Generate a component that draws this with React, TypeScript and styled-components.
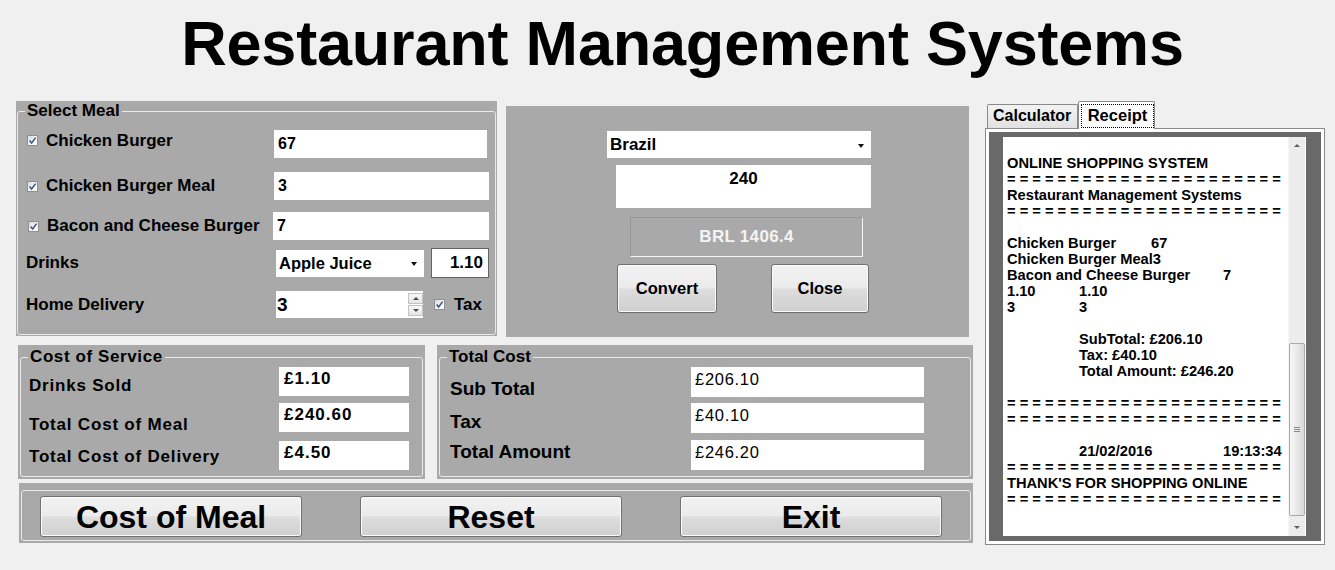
import React from "react";
import styled, { createGlobalStyle } from "styled-components";

const FONT = `"Liberation Sans", Arial, sans-serif`;

const GlobalStyle = createGlobalStyle`
  *, *::before, *::after { box-sizing: border-box; }
  html, body { margin: 0; padding: 0; background: #f0f0f0; }
  body { font-family: ${FONT}; color: #000; }
`;

const Window = styled.div`
  width: 1335px;
  height: 570px;
  overflow: hidden;
  background: #f0f0f0;
`;

const Title = styled.h1`
  margin: 0;
  height: 101px;
  padding: 7px 0 0 30px;
  text-align: center;
  font: bold 63px/72px ${FONT};
  letter-spacing: -0.2px;
  color: #000;
`;

const Main = styled.div`
  display: flex;
  align-items: flex-start;
  gap: 12px;
  padding-left: 16px;
`;

const LeftColumn = styled.div`
  width: 957px;
  display: flex;
  flex-direction: column;
`;

const Row = styled.div<{ $mt?: number; $ml?: number; $gap: number }>`
  display: flex;
  align-items: flex-start;
  gap: ${(p) => p.$gap}px;
  margin-top: ${(p) => p.$mt ?? 0}px;
  margin-left: ${(p) => p.$ml ?? 0}px;
`;

const Panel = styled.div<{ $w: number; $h: number; $pad: string; $mt?: number }>`
  flex: none;
  width: ${(p) => p.$w}px;
  height: ${(p) => p.$h}px;
  padding: ${(p) => p.$pad};
  margin-top: ${(p) => p.$mt ?? 0}px;
  background: #a9a9a9;
`;

const Group = styled.fieldset`
  margin: 0;
  padding: 0;
  min-width: 0;
  height: 100%;
  border: 1px solid #e9e9e9;
  border-radius: 3px;
`;

const Legend = styled.legend<{ $spacing?: number }>`
  margin-left: 7px;
  padding: 0 2px;
  font: bold 17px/18px ${FONT};
  letter-spacing: ${(p) => p.$spacing ?? 0}px;
`;

/* ---------- Select Meal ---------- */

const MealRows = styled.div`
  display: flex;
  flex-direction: column;
  padding-top: 10px;
`;

const MealRow = styled.div<{ $mt: number }>`
  display: flex;
  align-items: center;
  margin-top: ${(p) => p.$mt}px;
`;

const MealLabel = styled.div<{ $lift?: number; $indent: number }>`
  flex: none;
  width: 256px;
  display: flex;
  align-items: center;
  gap: 8px;
  padding-left: ${(p) => p.$indent}px;
  margin-bottom: ${(p) => p.$lift ?? 0}px;
  font: bold 17px/20px ${FONT};
  white-space: nowrap;
`;

const MealInput = styled.div<{ $w: number; $ml?: number }>`
  flex: none;
  width: ${(p) => p.$w}px;
  height: 28px;
  margin-left: ${(p) => p.$ml ?? 0}px;
  padding: 5px 0 0 4px;
  background: #fff;
  font: bold 16px/18px ${FONT};
`;

const Combo = styled.div<{ $w: number; $h: number; $ml?: number; $size: number }>`
  flex: none;
  width: ${(p) => p.$w}px;
  height: ${(p) => p.$h}px;
  margin-left: ${(p) => p.$ml ?? 0}px;
  display: flex;
  align-items: center;
  justify-content: space-between;
  padding: 0 7px 0 3px;
  background: #fff;
  font: bold ${(p) => p.$size}px/20px ${FONT};
`;

const ComboArrow = styled.span`
  width: 0;
  height: 0;
  border-left: 3.5px solid transparent;
  border-right: 3.5px solid transparent;
  border-top: 4px solid #111;
  margin-top: 2px;
`;

const PriceBox = styled.div`
  flex: none;
  width: 58px;
  height: 30px;
  margin-left: 7px;
  border: 1px solid #646464;
  background: #fff;
  padding-right: 5px;
  text-align: right;
  font: bold 17px/28px ${FONT};
`;

const Spinner = styled.div`
  flex: none;
  width: 147px;
  height: 27px;
  margin-left: 2px;
  display: flex;
  justify-content: space-between;
  background: #fff;
  padding: 3px 0 0 1px;
  font: bold 19px/22px ${FONT};
`;

const SpinButtons = styled.div`
  display: flex;
  flex-direction: column;
  gap: 1px;
  margin-top: -1px;
`;

const SpinButton = styled.div`
  width: 15px;
  height: 11px;
  border: 1px solid #c3c3c3;
  background: linear-gradient(#f8f8f8, #e6e6e6);
  display: flex;
  align-items: center;
  justify-content: center;
`;

const Tri = styled.span<{ $up?: boolean; $color?: string }>`
  width: 0;
  height: 0;
  border-left: 3px solid transparent;
  border-right: 3px solid transparent;
  ${(p) =>
    p.$up
      ? `border-bottom: 3px solid ${p.$color ?? "#4d4d4d"};`
      : `border-top: 3px solid ${p.$color ?? "#4d4d4d"};`}
`;

const TaxOption = styled.div`
  display: flex;
  align-items: center;
  gap: 9px;
  margin-left: 11px;
  font: bold 17px/20px ${FONT};
`;

const CheckBoxBox = styled.span`
  flex: none;
  width: 11px;
  height: 11px;
  border: 1px solid #8f8f8f;
  background: linear-gradient(135deg, #d6dbe2 0%, #f4f4f4 55%, #ffffff 100%);
  display: inline-flex;
  align-items: center;
  justify-content: center;
`;

function Check() {
  return (
    <CheckBoxBox>
      <svg width="9" height="9" viewBox="0 0 9 9">
        <path d="M1.6 4.6 L3.6 7 L7.6 1.6" fill="none" stroke="#3d5283" strokeWidth="1.5" />
      </svg>
    </CheckBoxBox>
  );
}

/* ---------- Currency ---------- */

const CurrencyBody = styled.div`
  display: flex;
  flex-direction: column;
  align-items: flex-start;
`;

const AmountBox = styled.div`
  width: 255px;
  height: 43px;
  margin: 7px 0 0 9px;
  padding-top: 4px;
  background: #fff;
  text-align: center;
  font: bold 17px/20px ${FONT};
`;

const ResultLabel = styled.div`
  width: 233px;
  height: 40px;
  margin: 9px 0 0 23px;
  border-style: solid;
  border-width: 1px;
  border-color: #979797 #f4f4f4 #f4f4f4 #979797;
  display: flex;
  align-items: center;
  justify-content: center;
  color: #f4f4f4;
  font: bold 17px/20px ${FONT};
  letter-spacing: 0.3px;
`;

const ButtonRow = styled.div`
  display: flex;
  gap: 54px;
  margin: 7px 0 0 10px;
`;

const WinButton = styled.button<{ $w: number; $h: number; $size: number }>`
  flex: none;
  width: ${(p) => p.$w}px;
  height: ${(p) => p.$h}px;
  padding: 0;
  border: 1px solid #707070;
  border-radius: 3px;
  box-shadow: inset 0 0 0 1px #fbfbfb;
  background: linear-gradient(#f2f2f2 0%, #ebebeb 48%, #dddddd 52%, #cfcfcf 100%);
  color: #000;
  font: bold ${(p) => p.$size}px/1 ${FONT};
  cursor: default;
`;

/* ---------- Cost panels ---------- */

const CostRows = styled.div`
  display: flex;
  flex-direction: column;
  padding-top: 1px;
`;

const CostRow = styled.div<{ $mt: number; $h: number }>`
  display: flex;
  align-items: flex-start;
  height: ${(p) => p.$h}px;
  margin-top: ${(p) => p.$mt}px;
`;

const ServiceLabel = styled.div<{ $top: number }>`
  flex: none;
  width: 258px;
  padding-left: 8px;
  margin-top: ${(p) => p.$top}px;
  font: bold 17px/20px ${FONT};
  letter-spacing: 0.8px;
  white-space: nowrap;
`;

const ServiceValue = styled.div`
  flex: none;
  width: 130px;
  height: 29px;
  padding: 2px 0 0 5px;
  background: #fff;
  font: bold 17px/20px ${FONT};
  letter-spacing: 1px;
`;

const TotalLabel = styled.div<{ $top: number }>`
  flex: none;
  width: 251px;
  padding-left: 10px;
  margin-top: ${(p) => p.$top}px;
  font: bold 19px/22px ${FONT};
  white-space: nowrap;
`;

const TotalValue = styled.div`
  flex: none;
  width: 233px;
  height: 30px;
  padding: 2px 0 0 4px;
  background: #fff;
  font: 16.5px/20px ${FONT};
  letter-spacing: 0.7px;
`;

const ActionGrid = styled.div`
  display: grid;
  grid-template-columns: repeat(3, 262px);
  column-gap: 58px;
  padding: 5px 0 0 18px;
`;

/* ---------- Tabs / Receipt ---------- */

const TabArea = styled.div`
  width: 340px;
  flex: none;
  display: flex;
  flex-direction: column;
`;

const TabStrip = styled.div`
  height: 27px;
  display: flex;
  align-items: flex-end;
  padding-left: 2px;
`;

const Tab = styled.div<{ $active?: boolean; $w: number }>`
  width: ${(p) => p.$w}px;
  height: ${(p) => (p.$active ? 28 : 24)}px;
  margin-bottom: ${(p) => (p.$active ? -1 : 0)}px;
  border: 1px solid #898989;
  border-bottom: none;
  border-radius: 2px 2px 0 0;
  background: ${(p) => (p.$active ? "#ffffff" : "linear-gradient(#f3f3f3, #e2e2e2)")};
  position: relative;
  z-index: ${(p) => (p.$active ? 1 : 0)};
  padding: ${(p) => (p.$active ? "2px 0 0 2px" : "0 0 0 5px")};
  font: bold 16px/22px ${FONT};
`;

const FocusRing = styled.div`
  width: 73px;
  height: 24px;
  border: 1px dotted #000;
  text-align: center;
  font: bold 16.5px/20px ${FONT};
`;

const TabPage = styled.div`
  height: 417px;
  border: 1px solid #898989;
  background: #fff;
  padding: 3px;
`;

const DarkArea = styled.div`
  height: 100%;
  background: #696969;
  padding: 5px 15px 5px 14px;
`;

const ReceiptBox = styled.div`
  height: 100%;
  background: #fff;
  display: flex;
`;

const ReceiptText = styled.pre`
  flex: 1;
  margin: 0;
  padding: 2px 0 0 4px;
  overflow: hidden;
  white-space: pre;
  tab-size: 72px;
  -moz-tab-size: 72px;
  font: bold 14.67px/16px ${FONT};
  color: #000;
`;

const ScrollBar = styled.div`
  width: 17px;
  margin-right: 1px;
  display: flex;
  flex-direction: column;
  background: #ececec;
  border-left: 1px solid #f6f6f6;
`;

const ScrollArrow = styled.div`
  height: 17px;
  display: flex;
  align-items: center;
  justify-content: center;
`;

const ScrollTrack = styled.div`
  flex: 1;
  display: flex;
  flex-direction: column;
  justify-content: flex-end;
  padding: 0 0 3px 0;
`;

const Thumb = styled.div`
  height: 173px;
  border: 1px solid #a9a9a9;
  border-radius: 2px;
  background: linear-gradient(to right, #f6f6f6, #e9e9e9 50%, #d9d9d9);
  display: flex;
  flex-direction: column;
  align-items: center;
  justify-content: center;
  gap: 1px;
`;

const Grip = styled.span`
  width: 6px;
  height: 1px;
  background: #8a8a8a;
`;

const EQ = Array(22).fill("=").join(" ");

const receiptLines = [
  "",
  "ONLINE SHOPPING SYSTEM",
  EQ,
  "Restaurant Management Systems",
  EQ,
  "",
  "Chicken Burger\t67",
  "Chicken Burger Meal3",
  "Bacon and Cheese Burger\t7",
  "1.10\t1.10",
  "3\t3",
  "",
  "\tSubTotal: £206.10",
  "\tTax: £40.10",
  "\tTotal Amount: £246.20",
  "",
  EQ,
  EQ,
  "",
  "\t21/02/2016\t19:13:34",
  EQ,
  "THANK'S FOR SHOPPING ONLINE",
  EQ,
];

export default function App() {
  return (
    <Window>
      <GlobalStyle />
      <Title>Restaurant Management Systems</Title>
      <Main>
        <LeftColumn>
          <Row $gap={9}>
            <Panel $w={481} $h={235} $pad="1px">
              <Group>
                <Legend>Select Meal</Legend>
                <MealRows>
                  <MealRow $mt={0}>
                    <MealLabel $indent={9} $lift={7}>
                      <Check />
                      Chicken Burger
                    </MealLabel>
                    <MealInput $w={213}>67</MealInput>
                  </MealRow>
                  <MealRow $mt={14}>
                    <MealLabel $indent={9}>
                      <Check />
                      Chicken Burger Meal
                    </MealLabel>
                    <MealInput $w={215}>3</MealInput>
                  </MealRow>
                  <MealRow $mt={12}>
                    <MealLabel $indent={10}>
                      <Check />
                      Bacon and Cheese Burger
                    </MealLabel>
                    <MealInput $w={216} $ml={-1}>7</MealInput>
                  </MealRow>
                  <MealRow $mt={8}>
                    <MealLabel $indent={8}>Drinks</MealLabel>
                    <Combo $w={148} $h={27} $ml={2} $size={16.5}>
                      Apple Juice
                      <ComboArrow />
                    </Combo>
                    <PriceBox>1.10</PriceBox>
                  </MealRow>
                  <MealRow $mt={13}>
                    <MealLabel $indent={8}>Home Delivery</MealLabel>
                    <Spinner>
                      3
                      <SpinButtons>
                        <SpinButton>
                          <Tri $up />
                        </SpinButton>
                        <SpinButton>
                          <Tri />
                        </SpinButton>
                      </SpinButtons>
                    </Spinner>
                    <TaxOption>
                      <Check />
                      Tax
                    </TaxOption>
                  </MealRow>
                </MealRows>
              </Group>
            </Panel>
            <Panel $w={463} $h={231} $mt={5} $pad="25px 0 0 101px">
              <CurrencyBody>
                <Combo $w={264} $h={27} $size={17}>
                  Brazil
                  <ComboArrow />
                </Combo>
                <AmountBox>240</AmountBox>
                <ResultLabel>BRL 1406.4</ResultLabel>
                <ButtonRow>
                  <WinButton $w={100} $h={49} $size={16.5}>
                    Convert
                  </WinButton>
                  <WinButton $w={98} $h={49} $size={16.5}>
                    Close
                  </WinButton>
                </ButtonRow>
              </CurrencyBody>
            </Panel>
          </Row>

          <Row $gap={12} $mt={8} $ml={2}>
            <Panel $w={407} $h={134} $pad="3px 2px 2px 2px">
              <Group>
                <Legend $spacing={0.6}>Cost of Service</Legend>
                <CostRows>
                  <CostRow $mt={0} $h={29}>
                    <ServiceLabel $top={9}>Drinks Sold</ServiceLabel>
                    <ServiceValue>£1.10</ServiceValue>
                  </CostRow>
                  <CostRow $mt={7} $h={29}>
                    <ServiceLabel $top={12}>Total Cost of Meal</ServiceLabel>
                    <ServiceValue>£240.60</ServiceValue>
                  </CostRow>
                  <CostRow $mt={9} $h={29}>
                    <ServiceLabel $top={6}>Total Cost of Delivery</ServiceLabel>
                    <ServiceValue>£4.50</ServiceValue>
                  </CostRow>
                </CostRows>
              </Group>
            </Panel>
            <Panel $w={536} $h={134} $pad="3px 2px 2px 2px">
              <Group>
                <Legend>Total Cost</Legend>
                <CostRows>
                  <CostRow $mt={0} $h={30}>
                    <TotalLabel $top={11}>Sub Total</TotalLabel>
                    <TotalValue>£206.10</TotalValue>
                  </CostRow>
                  <CostRow $mt={6} $h={30}>
                    <TotalLabel $top={8}>Tax</TotalLabel>
                    <TotalValue>£40.10</TotalValue>
                  </CostRow>
                  <CostRow $mt={7} $h={30}>
                    <TotalLabel $top={1}>Total Amount</TotalLabel>
                    <TotalValue>£246.20</TotalValue>
                  </CostRow>
                </CostRows>
              </Group>
            </Panel>
          </Row>

          <Row $gap={0} $mt={4} $ml={3}>
            <Panel $w={954} $h={60} $pad="7px 2px 2px 2px">
              <Group>
                <ActionGrid>
                  <WinButton $w={262} $h={41} $size={32}>
                    Cost of Meal
                  </WinButton>
                  <WinButton $w={262} $h={41} $size={32}>
                    Reset
                  </WinButton>
                  <WinButton $w={262} $h={41} $size={32}>
                    Exit
                  </WinButton>
                </ActionGrid>
              </Group>
            </Panel>
          </Row>
        </LeftColumn>

        <TabArea>
          <TabStrip>
            <Tab $w={91}>Calculator</Tab>
            <Tab $w={77} $active>
              <FocusRing>Receipt</FocusRing>
            </Tab>
          </TabStrip>
          <TabPage>
            <DarkArea>
              <ReceiptBox>
                <ReceiptText>{receiptLines.join("\n")}</ReceiptText>
                <ScrollBar>
                  <ScrollArrow>
                    <Tri $up $color="#5f5f5f" />
                  </ScrollArrow>
                  <ScrollTrack>
                    <Thumb>
                      <Grip />
                      <Grip />
                      <Grip />
                    </Thumb>
                  </ScrollTrack>
                  <ScrollArrow>
                    <Tri $color="#5f5f5f" />
                  </ScrollArrow>
                </ScrollBar>
              </ReceiptBox>
            </DarkArea>
          </TabPage>
        </TabArea>
      </Main>
    </Window>
  );
}
